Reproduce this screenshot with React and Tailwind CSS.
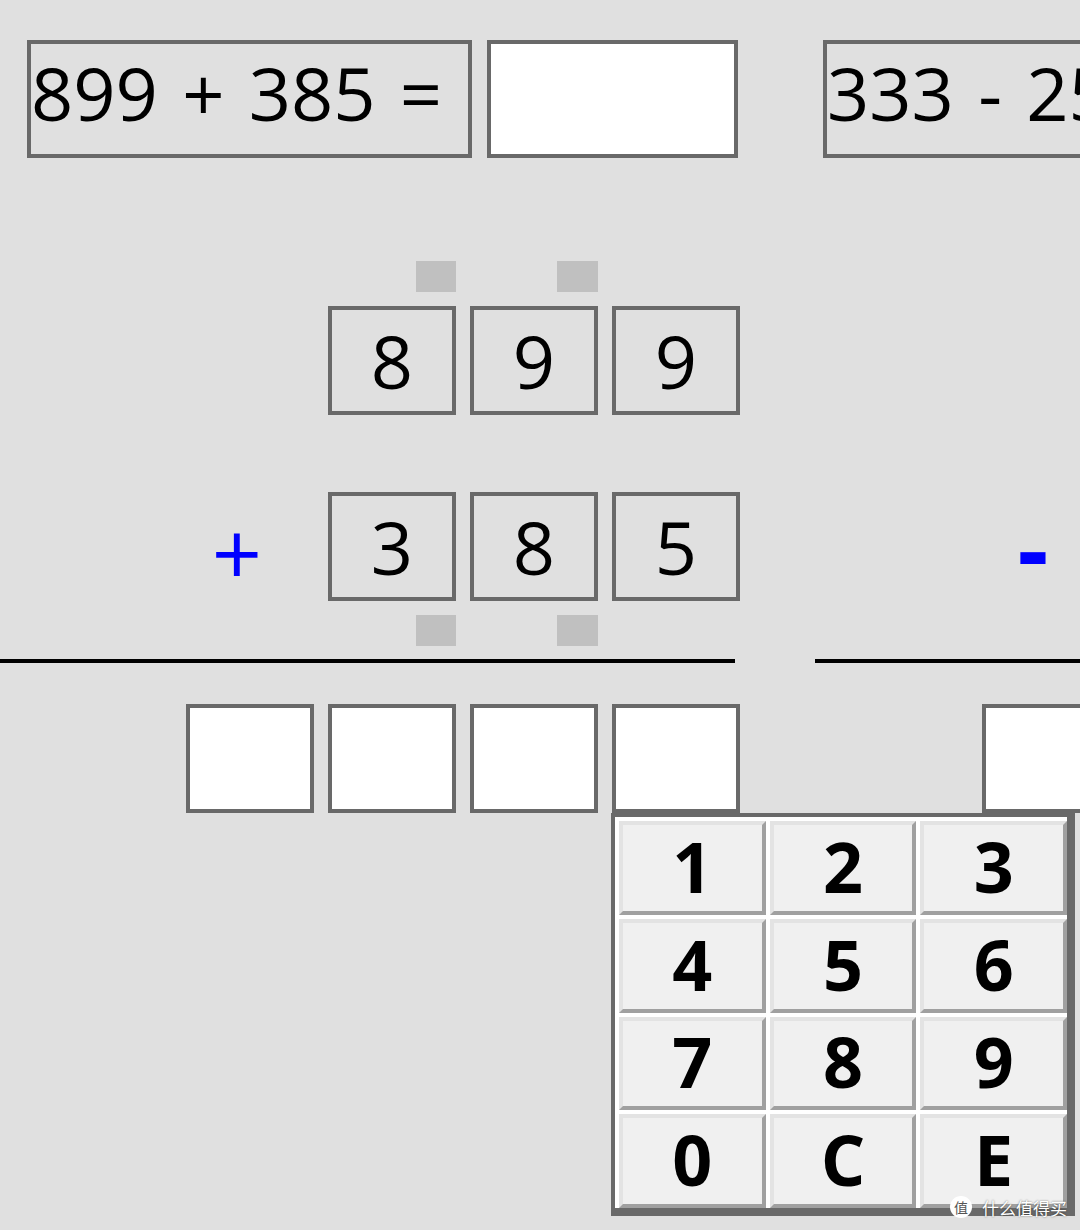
import React from "react";

// two column-addition / subtraction drills side by side
const problems = [
  { text: "899 + 385 =", op: "+", top: ["8", "9", "9"], bottom: ["3", "8", "5"] },
  { text: "333 - 258 =", op: "-", top: ["3", "3", "3"], bottom: ["2", "5", "8"] },
];

const keys = ["1", "2", "3", "4", "5", "6", "7", "8", "9", "0", "C", "E"];

function Cell({ children, white }) {
  return (
    <div
      className={`flex h-[109px] w-[128px] items-center justify-center border-4 border-[#696969] text-[74px] leading-none ${
        white ? "bg-white" : "bg-[#e0e0e0]"
      }`}
    >
      {children}
    </div>
  );
}

function CarryRow() {
  return (
    <div className="grid h-[31px] grid-cols-[repeat(4,128px)] gap-x-[14px]">
      <div />
      <div className="flex justify-end">
        <div className="h-[31px] w-[40px] bg-[#c0c0c0]" />
      </div>
      <div className="flex justify-end">
        <div className="h-[31px] w-[41px] bg-[#c0c0c0]" />
      </div>
      <div />
    </div>
  );
}

function Problem({ p, first }) {
  return (
    <div className="w-[796px] shrink-0">
      <div className="ml-[27px] flex h-[118px] gap-[15px]">
        <div className="flex w-[445px] items-center border-4 border-[#696969] pb-[12px] text-[74px] leading-none whitespace-nowrap [word-spacing:5px]">
          {p.text}
        </div>
        <div className="w-[251px] border-4 border-[#696969] bg-white" />
      </div>

      <div className="ml-[186px] mt-[103px]">
        <CarryRow />
        <div className="mt-[14px] grid grid-cols-[repeat(4,128px)] gap-x-[14px]">
          <div />
          {p.top.map((d, i) => (
            <Cell key={i}>{d}</Cell>
          ))}
        </div>
        <div className="mt-[77px] grid grid-cols-[repeat(4,128px)] gap-x-[14px]">
          {p.op === "+" ? (
            <div className="flex items-center justify-center pr-[26px] pt-[10px] text-[88px] leading-none text-[#0000ff]">
              +
            </div>
          ) : (
            <div className="flex items-center justify-center pr-[26px] text-[96px] font-bold leading-none text-[#0000ff]">
              -
            </div>
          )}
          {p.bottom.map((d, i) => (
            <Cell key={i}>{d}</Cell>
          ))}
        </div>
        <div className="mt-[14px]">
          <CarryRow />
        </div>
      </div>

      <div className={first ? "mt-[13px] h-[4px] w-[735px] bg-black" : "mt-[13px] ml-[19px] h-[4px] w-[716px] bg-black"} />

      <div className="ml-[186px] mt-[41px] grid grid-cols-[repeat(4,128px)] gap-x-[14px]">
        <Cell white />
        <Cell white />
        <Cell white />
        <Cell white />
      </div>
    </div>
  );
}

function Keypad() {
  return (
    <div className="absolute left-[611px] top-[813px] z-10 grid h-[403px] w-[464px] grid-cols-3 grid-rows-4 border-t-4 border-l-4 border-r-8 border-b-8 border-[#696969] bg-white">
      {keys.map((k) => (
        <div key={k} className="border-t-4 border-l-4 border-white">
          <button className="flex h-full w-full items-center justify-center border-4 border-t-[#e3e3e3] border-l-[#e3e3e3] border-r-[#a0a0a0] border-b-[#a0a0a0] bg-[#f0f0f0] pb-[4px] text-[70px] font-bold leading-none text-black">
            {k}
          </button>
        </div>
      ))}
    </div>
  );
}

export default function App() {
  return (
    <div className="relative h-[1230px] w-[1080px] overflow-hidden bg-[#e0e0e0] font-['Open_Sans',sans-serif] text-black">
      <div className="flex pt-[40px]">
        {problems.map((p, i) => (
          <Problem key={i} p={p} first={i === 0} />
        ))}
      </div>

      <Keypad />

      {/* site watermark over the bottom-right corner */}
      <div className="absolute left-[950px] top-[1196px] z-20 flex items-center gap-[10px] font-['Noto_Sans_CJK_SC',sans-serif]">
        <div className="flex h-[22px] w-[22px] items-center justify-center rounded-full bg-white text-[14px] leading-none text-[#555]">
          值
        </div>
        <span className="text-[17px] leading-none text-white [text-shadow:0_0_2px_rgba(0,0,0,0.6)]">什么值得买</span>
      </div>
    </div>
  );
}
